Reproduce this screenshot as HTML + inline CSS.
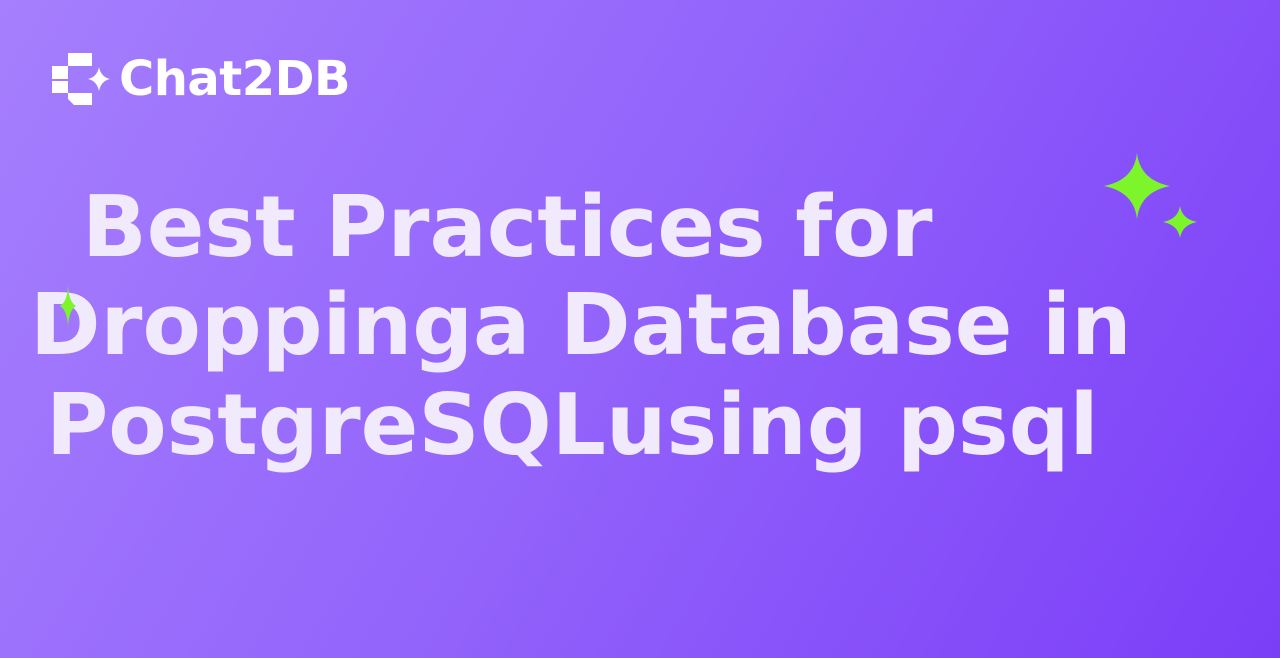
<!DOCTYPE html>
<html><head><meta charset="utf-8"><style>
html,body{margin:0;padding:0}
body{width:1280px;height:658px;overflow:hidden;position:relative;
background:linear-gradient(120deg,#a57ffd 0%,#9465fb 45%,#7b3ef8 100%);}
.l{position:absolute;font-family:"DejaVu Sans",sans-serif;font-weight:bold;font-size:85px;color:#f1eafc;white-space:pre;line-height:1}
.logo{position:absolute;left:119px;top:55px;font-family:"DejaVu Sans",sans-serif;font-weight:bold;font-size:48px;letter-spacing:-0.5px;color:#fff;line-height:1}
svg{position:absolute;z-index:2}
</style></head><body>
<svg style="left:50px;top:50px" width="62" height="58" viewBox="0 0 62 58">
<path d="M18 3h24v13H18z" fill="#fff"/>
<path d="M2 16h16v13H2z" fill="#fff"/>
<path d="M2 31h16v12H2z" fill="#fff"/>
<path d="M18 43h24v12H24l-6-6z" fill="#fff"/>
<path d="M49 17 Q51 27 60 29 Q51 31 49 41 Q47 31 38 29 Q47 27 49 17Z" fill="#fff"/>
</svg>
<div class="logo">Chat2DB</div>
<svg style="left:1100px;top:150px" width="100" height="95" viewBox="0 0 100 95">
<path d="M37 3 Q40 30 70 36 Q40 42 37 69 Q34 42 4 36 Q34 30 37 3Z" fill="#7cf52a"/>
<path d="M80 56 Q82 69 97 72 Q82 75 80 88 Q78 75 63 72 Q78 69 80 56Z" fill="#7cf52a"/>
</svg>
<svg style="left:58px;top:284px" width="20" height="44" viewBox="0 0 20 44">
<path d="M10 2 Q11 18 18 22 Q11 26 10 42 Q9 26 2 22 Q9 18 10 2Z" fill="#7cf52a"/>
</svg>
<div class="l" style="left:82px;top:185px">Best Practices for</div>
<div class="l" style="left:30px;top:283px">Droppinga Database in</div>
<div class="l" style="left:46px;top:383px">PostgreSQLusing psql</div>
</body></html>
